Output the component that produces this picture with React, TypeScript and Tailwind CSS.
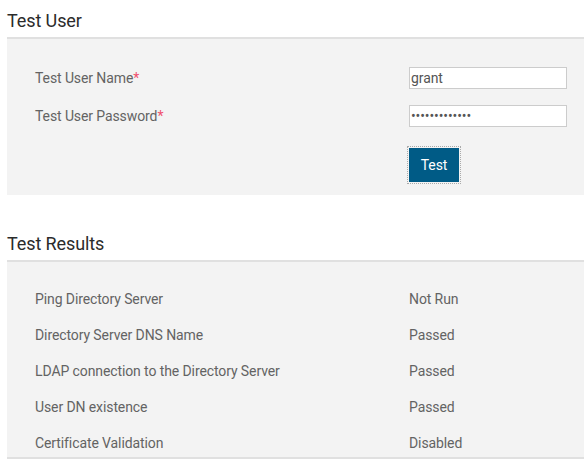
import React from "react";

const results = [
  { name: "Ping Directory Server", status: "Not Run" },
  { name: "Directory Server DNS Name", status: "Passed" },
  { name: "LDAP connection to the Directory Server", status: "Passed" },
  { name: "User DN existence", status: "Passed" },
  { name: "Certificate Validation", status: "Disabled" },
];

function Heading({ children, className = "" }: { children: React.ReactNode; className?: string }) {
  return (
    <h2
      className={`pt-[10px] pb-[5px] text-[18px] leading-[22px] text-[#2b2b2b] border-b-2 border-[#e0e0e0] ${className}`}
    >
      {children}
    </h2>
  );
}

export default function App() {
  return (
    <div className="w-[584px] h-[460px] overflow-hidden bg-white pl-[7px] font-['Roboto',sans-serif] text-[14px] tracking-[-0.1px] text-[#636363]">
      {/* --- Test User --- */}
      <Heading>Test User</Heading>
      <div className="bg-[#f3f3f3] pl-[28px] pt-[28px] pb-[13px]">
        <div className="flex items-center h-[22px]">
          <label className="w-[374px]">
            Test User Name<span className="text-[#f0506e]">*</span>
          </label>
          <input
            type="text"
            defaultValue="grant"
            className="w-[158px] h-[22px] border border-[#ccc] bg-white px-[1px] text-[14px] text-[#555] outline-none"
          />
        </div>
        <div className="flex items-center h-[22px] mt-[16px]">
          <label className="w-[374px]">
            Test User Password<span className="text-[#f0506e]">*</span>
          </label>
          <input
            type="password"
            defaultValue="grant12345678"
            className="w-[158px] h-[22px] border border-[#ccc] bg-white px-[1px] text-[14px] text-[#555] outline-none"
          />
        </div>
        <div className="flex mt-[21px] pl-[374px]">
          <button className="w-[50px] h-[34px] bg-[#005b86] text-white text-[14px] outline-1 outline-dotted outline-[#aaa] outline-offset-1">
            Test
          </button>
        </div>
      </div>

      {/* --- Test Results --- */}
      <Heading className="mt-[28px]">Test Results</Heading>
      <div className="bg-[#f3f3f3] pl-[28px] pt-[26px] pb-[3px] border-b-2 border-[#e0e0e0] flex flex-col gap-[14px]">
        {results.map((r) => (
          <div key={r.name} className="flex items-center h-[22px]">
            <span className="w-[374px]">{r.name}</span>
            <span>{r.status}</span>
          </div>
        ))}
      </div>
    </div>
  );
}
